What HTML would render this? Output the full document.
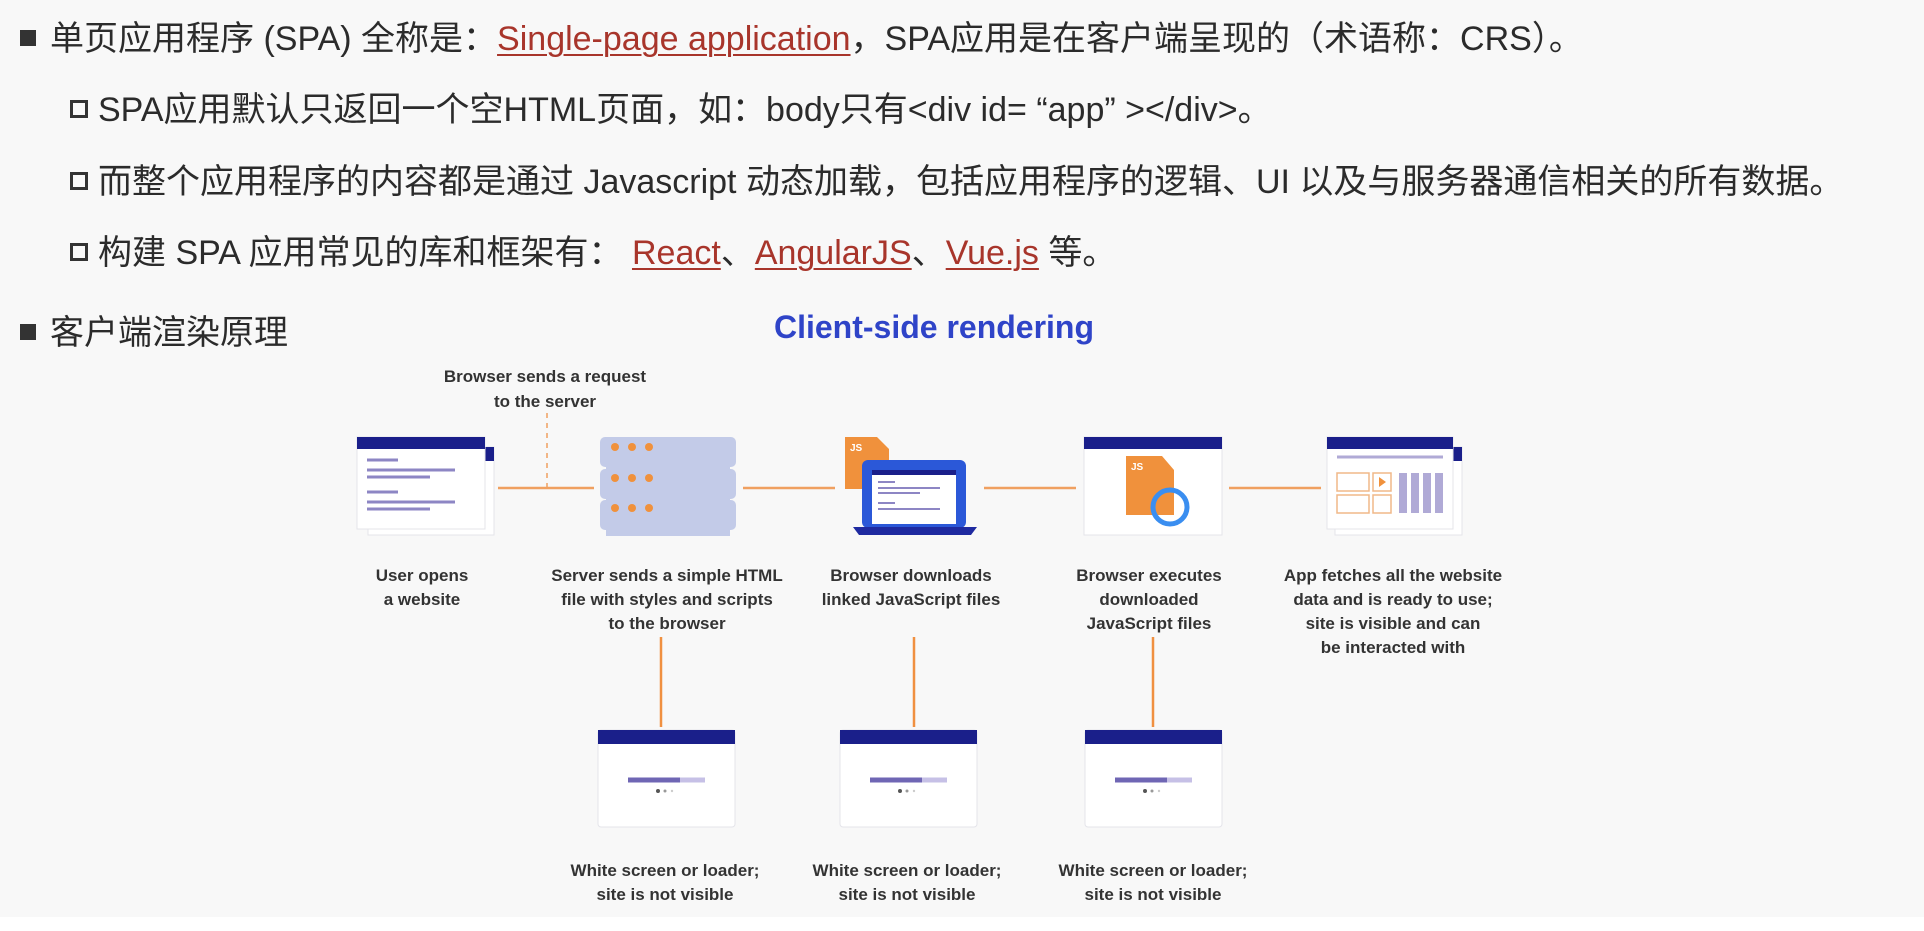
<!DOCTYPE html>
<html><head><meta charset="utf-8">
<style>
html,body{margin:0;padding:0;}
body{width:1924px;height:931px;background:#f8f8f8;position:relative;overflow:hidden;font-family:"Liberation Sans","Noto Sans CJK SC",sans-serif;color:#2b2b2b;}
.l{position:absolute;font-size:34px;white-space:nowrap;line-height:40px;}
.a{color:#a8352b;text-decoration:underline;text-decoration-thickness:2px;text-underline-offset:4px;}
.sq{display:inline-block;width:16px;height:16px;background:#333;vertical-align:middle;margin-right:14px;position:relative;top:-3px}
.hs{display:inline-block;width:18px;height:18px;border:3.5px solid #333;box-sizing:border-box;vertical-align:middle;margin-right:10px;position:relative;top:-3px}
.bottom{position:absolute;left:0;top:917px;width:1924px;height:14px;background:#fff}
svg{position:absolute;left:0;top:0}
</style></head><body>
<div class="l" style="left:20px;top:19px"><span class="sq"></span>单页应用程序 (SPA) 全称是：<span class="a">Single-page application</span>，SPA应用是在客户端呈现的（术语称：CRS）。</div>
<div class="l" style="left:70px;top:90px"><span class="hs"></span>SPA应用默认只返回一个空HTML页面，如：body只有&lt;div id= “app” &gt;&lt;/div&gt;。</div>
<div class="l" style="left:70px;top:162px"><span class="hs"></span>而整个应用程序的内容都是通过 Javascript 动态加载，包括应用程序的逻辑、UI 以及与服务器通信相关的所有数据。</div>
<div class="l" style="left:70px;top:233px"><span class="hs"></span>构建 SPA 应用常见的库和框架有： <span class="a">React</span>、<span class="a">AngularJS</span>、<span class="a">Vue.js</span> 等。</div>
<div class="l" style="left:20px;top:313px"><span class="sq"></span>客户端渲染原理</div>
<div class="bottom"></div>
<svg width="1924" height="931" font-family="Liberation Sans, sans-serif">
<text x="934" y="338" text-anchor="middle" font-size="32" font-weight="bold" fill="#2f44c8">Client-side rendering</text>
<g font-size="17" font-weight="bold" fill="#333" text-anchor="middle">
<text x="545" y="382">Browser sends a request</text><text x="545" y="407">to the server</text>
<text x="422" y="581">User opens</text><text x="422" y="605">a website</text>
<text x="667" y="581">Server sends a simple HTML</text><text x="667" y="605">file with styles and scripts</text><text x="667" y="629">to the browser</text>
<text x="911" y="581">Browser downloads</text><text x="911" y="605">linked JavaScript files</text>
<text x="1149" y="581">Browser executes</text><text x="1149" y="605">downloaded</text><text x="1149" y="629">JavaScript files</text>
<text x="1393" y="581">App fetches all the website</text><text x="1393" y="605">data and is ready to use;</text><text x="1393" y="629">site is visible and can</text><text x="1393" y="653">be interacted with</text>
<text x="665" y="876">White screen or loader;</text><text x="665" y="900">site is not visible</text>
<text x="907" y="876">White screen or loader;</text><text x="907" y="900">site is not visible</text>
<text x="1153" y="876">White screen or loader;</text><text x="1153" y="900">site is not visible</text>
</g>
<g stroke="#f0a060" stroke-width="2.5">
<line x1="498" y1="488" x2="594" y2="488"/><line x1="743" y1="488" x2="835" y2="488"/>
<line x1="984" y1="488" x2="1076" y2="488"/><line x1="1229" y1="488" x2="1321" y2="488"/>
<line x1="547" y1="413" x2="547" y2="488" stroke-dasharray="5,5" stroke-width="1.5"/>
<line x1="661" y1="637" x2="661" y2="727" stroke="#f09040"/><line x1="914" y1="637" x2="914" y2="727" stroke="#f09040"/><line x1="1153" y1="637" x2="1153" y2="727" stroke="#f09040"/>
</g>
<rect x="368" y="447" width="126" height="88" fill="#fff" stroke="#e4e4ea"/>
<rect x="484" y="447" width="10" height="14" fill="#1a1f8a"/>
<rect x="357" y="437" width="128" height="92" fill="#fff" stroke="#e4e4ea"/>
<rect x="357" y="437" width="128" height="12" fill="#1a1f8a"/>
<g stroke="#8d86c4" stroke-width="3"><line x1="367" y1="460" x2="398" y2="460"/><line x1="367" y1="470" x2="455" y2="470"/><line x1="367" y1="477" x2="430" y2="477"/><line x1="367" y1="492" x2="398" y2="492"/><line x1="367" y1="502" x2="455" y2="502"/><line x1="367" y1="509" x2="430" y2="509"/></g>
<g fill="#c3cbe8"><rect x="600" y="437" width="136" height="30" rx="5"/><rect x="606" y="467" width="124" height="12"/><rect x="600" y="469" width="136" height="30" rx="5"/><rect x="606" y="499" width="124" height="12"/><rect x="600" y="500" width="136" height="30" rx="5"/><rect x="606" y="526" width="124" height="10"/></g>
<g fill="#f0913c"><circle cx="615" cy="447" r="4"/><circle cx="632" cy="447" r="4"/><circle cx="649" cy="447" r="4"/><circle cx="615" cy="478" r="4"/><circle cx="632" cy="478" r="4"/><circle cx="649" cy="478" r="4"/><circle cx="615" cy="508" r="4"/><circle cx="632" cy="508" r="4"/><circle cx="649" cy="508" r="4"/></g>
<path d="M845 437 h32 l12 12 v40 h-44z" fill="#f0913c"/>
<text x="850" y="451" font-size="10" font-weight="bold" fill="#fff">JS</text>
<rect x="862" y="460" width="104" height="68" rx="6" fill="#2b58d8"/>
<rect x="872" y="470" width="84" height="54" fill="#fff"/>
<rect x="872" y="470" width="84" height="5" fill="#1a1f8a"/>
<g stroke="#8d86c4" stroke-width="2"><line x1="878" y1="482" x2="895" y2="482"/><line x1="878" y1="488" x2="940" y2="488"/><line x1="878" y1="493" x2="920" y2="493"/><line x1="878" y1="503" x2="895" y2="503"/><line x1="878" y1="509" x2="940" y2="509"/></g>
<path d="M853 527 h124 l-6 8 h-112z" fill="#1f2aa0"/>
<rect x="1084" y="437" width="138" height="98" fill="#fff" stroke="#e4e4ea"/>
<rect x="1084" y="437" width="138" height="12" fill="#1a1f8a"/>
<path d="M1126 456 h36 l12 14 v45 h-48z" fill="#f0913c"/>
<text x="1131" y="470" font-size="10" font-weight="bold" fill="#fff">JS</text>
<circle cx="1170" cy="507" r="17" fill="none" stroke="#3a8ef0" stroke-width="5"/>
<rect x="1335" y="447" width="127" height="88" fill="#fff" stroke="#e4e4ea"/>
<rect x="1452" y="447" width="10" height="14" fill="#1a1f8a"/>
<rect x="1327" y="437" width="126" height="92" fill="#fff" stroke="#e4e4ea"/>
<rect x="1327" y="437" width="126" height="12" fill="#1a1f8a"/>
<line x1="1337" y1="457" x2="1443" y2="457" stroke="#b0aad6" stroke-width="3"/>
<g fill="none" stroke="#f0b888" stroke-width="1.5"><rect x="1337" y="473" width="32" height="18"/><rect x="1373" y="473" width="18" height="18"/><rect x="1337" y="495" width="32" height="18"/><rect x="1373" y="495" width="18" height="18"/></g>
<path d="M1379 477 l7 5 l-7 5z" fill="#f0913c"/>
<g fill="#b0aad6"><rect x="1399" y="473" width="8" height="40"/><rect x="1411" y="473" width="8" height="40"/><rect x="1423" y="473" width="8" height="40"/><rect x="1435" y="473" width="8" height="40"/></g>
<g>
<rect x="598" y="730" width="137" height="97" rx="3" fill="#fff" stroke="#e4e4ea"/><rect x="598" y="730" width="137" height="14" fill="#1a1f8a"/>
<line x1="628" y1="780" x2="705" y2="780" stroke="#c6c0e6" stroke-width="5"/><line x1="628" y1="780" x2="680" y2="780" stroke="#6f66b4" stroke-width="5"/>
<circle cx="658" cy="791" r="2" fill="#555"/><circle cx="665" cy="791" r="1.5" fill="#999"/><circle cx="672" cy="791" r="1.2" fill="#ccc"/>
<rect x="840" y="730" width="137" height="97" rx="3" fill="#fff" stroke="#e4e4ea"/><rect x="840" y="730" width="137" height="14" fill="#1a1f8a"/>
<line x1="870" y1="780" x2="947" y2="780" stroke="#c6c0e6" stroke-width="5"/><line x1="870" y1="780" x2="922" y2="780" stroke="#6f66b4" stroke-width="5"/>
<circle cx="900" cy="791" r="2" fill="#555"/><circle cx="907" cy="791" r="1.5" fill="#999"/><circle cx="914" cy="791" r="1.2" fill="#ccc"/>
<rect x="1085" y="730" width="137" height="97" rx="3" fill="#fff" stroke="#e4e4ea"/><rect x="1085" y="730" width="137" height="14" fill="#1a1f8a"/>
<line x1="1115" y1="780" x2="1192" y2="780" stroke="#c6c0e6" stroke-width="5"/><line x1="1115" y1="780" x2="1167" y2="780" stroke="#6f66b4" stroke-width="5"/>
<circle cx="1145" cy="791" r="2" fill="#555"/><circle cx="1152" cy="791" r="1.5" fill="#999"/><circle cx="1159" cy="791" r="1.2" fill="#ccc"/>
</g>
</svg>
</body></html>
